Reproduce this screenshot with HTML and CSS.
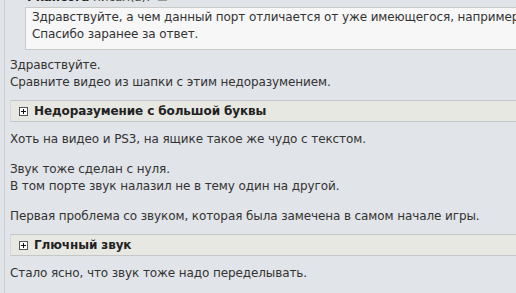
FILE: index.html
```html
<!DOCTYPE html>
<html>
<head>
<meta charset="utf-8">
<link rel="stylesheet" href="styles.css">
</head>
<body>
<div class="post">
  <div class="quote-head"><b>Ркансога</b> писал(а): <span class="qicon"></span></div>
  <div class="quote">Здравствуйте, а чем данный порт отличается от уже имеющегося, например, от R.G. Механики?<br>Спасибо заранее за ответ.</div>
  <p class="tight">Здравствуйте.<br>Сравните видео из шапки с этим недоразумением.</p>
  <div class="spoiler"><span class="plus"></span>Недоразумение с большой буквы</div>
  <p class="after">Хоть на видео и PS3, на ящике такое же чудо с текстом.</p>
  <p>Звук тоже сделан с нуля.<br>В том порте звук налазил не в тему один на другой.</p>
  <p>Первая проблема со звуком, которая была замечена в самом начале игры.</p>
  <div class="spoiler"><span class="plus"></span>Глючный звук</div>
  <p class="after">Стало ясно, что звук тоже надо переделывать.</p>
</div>
</body>
</html>
```
FILE: styles.css
```css
html, body {
  margin: 0;
  padding: 0;
  background: #e1e4e8;
  overflow: hidden;
}
body {
  font-family: "DejaVu Sans", Verdana, sans-serif;
  font-size: 12px;
  letter-spacing: -0.1px;
  color: #333;
  padding-left: 4px;
}
.post {
  border-left: 1px solid #c9cdd2;
  margin-top: -11px;
  padding-left: 5px;
  line-height: 17px;
  padding-bottom: 20px;
}
.quote-head {
  padding-left: 17px;
  height: 18px;
  color: #444;
  white-space: nowrap;
}
.quote-head b { color: #222; }
.qicon {
  display: inline-block;
  width: 7px;
  height: 7px;
  border: 1px solid #999;
  background: #fff;
  margin-left: 4px;
}
.quote {
  margin: 0 0 0 15px;
  background: #f7f7f7;
  border: 1px solid #c9c9c9;
  border-right: none;
  padding: 1px 0 6px 6px;
  white-space: nowrap;
  overflow: hidden;
  color: #333;
}
p {
  margin: 13px 0 0 0;
}
p.tight { margin-top: 7px; }
p.after { margin-top: 9px; }
.spoiler {
  margin-top: 9px;
  background: #e8e8e2;
  border-top: 1px solid #c4c7ca;
  border-bottom: 1px solid #c4c7ca;
  border-left: 1px solid #d6d8da;
  height: 20px;
  line-height: 20px;
  font-weight: bold;
  color: #222;
  padding-left: 8px;
  display: flex;
  align-items: center;
}
.plus {
  width: 7px;
  height: 7px;
  border: 1px solid #555;
  background: #fff;
  margin-right: 6px;
  position: relative;
}
.plus::before {
  content: "";
  position: absolute;
  left: 1px; top: 3px;
  width: 5px; height: 1px;
  background: #111;
}
.plus::after {
  content: "";
  position: absolute;
  left: 3px; top: 1px;
  width: 1px; height: 5px;
  background: #111;
}
```
